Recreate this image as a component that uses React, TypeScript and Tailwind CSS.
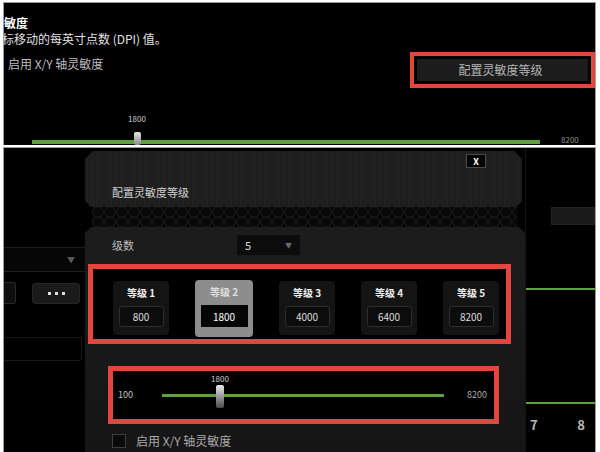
import React from "react";

const levels = [
  { name: "等级 1", value: "800" },
  { name: "等级 2", value: "1800", active: true },
  { name: "等级 3", value: "4000" },
  { name: "等级 4", value: "6400" },
  { name: "等级 5", value: "8200" },
];

function Honeycomb() {
  return (
    <svg className="block h-full w-full" preserveAspectRatio="none">
      <defs>
        <pattern id="hex" width="12" height="10" patternUnits="userSpaceOnUse">
          <path
            d="M3 0 L9 0 L12 5 L9 10 L3 10 L0 5 Z"
            fill="#080808"
            stroke="#1c1c1c"
            strokeWidth="1"
          />
        </pattern>
      </defs>
      <rect width="100%" height="100%" fill="#040404" />
      <rect width="100%" height="100%" fill="url(#hex)" />
    </svg>
  );
}

function LevelCard({ name, value, active }: { name: string; value: string; active?: boolean }) {
  return (
    <div
      className={
        active
          ? "flex h-[57px] w-[58px] flex-col items-center rounded-[4px] bg-[#8d8d8d] pt-[5px] -mt-[1px]"
          : "flex h-[54px] w-[56px] flex-col items-center rounded-[4px] bg-[#141414] pt-[5px]"
      }
    >
      <div className={active ? "text-[10px] font-bold leading-[14px] text-[#dedede]" : "text-[10px] font-bold leading-[14px] text-[#ececec]"}>
        {name}
      </div>
      <div
        className={
          active
            ? "mt-[6px] flex h-[22px] w-[47px] items-center justify-center bg-[#050505] text-[10px] text-white"
            : "mt-[6px] flex h-[21px] w-[45px] items-center justify-center rounded-[3px] border border-[#2e2e2e] bg-[#0c0c0c] text-[10px] text-[#dcdcdc]"
        }
      >
        {value}
      </div>
    </div>
  );
}

export default function App() {
  return (
    <div className="h-[452px] w-[600px] overflow-hidden bg-white font-['Noto_Sans_CJK_SC','Noto_Sans',sans-serif]">
      {/* top screenshot */}
      <div className="ml-[3px] mt-[2px] flex h-[143px] w-[593px] flex-col overflow-hidden border-l border-r border-t border-[#9c9c9c] bg-black">
        <div className="mt-[12px] text-[12px] font-bold leading-[16px] text-white">敏度</div>
        <div className="-ml-[2px] text-[12px] leading-[16px] text-[#e2e2e2]">标移动的每英寸点数 (DPI) 值。</div>
        <div className="mt-[5px] flex items-start justify-between">
          <div className="ml-[4px] mt-[4px] text-[12px] leading-[16px] text-[#bdbdbd]">启用 X/Y 轴灵敏度</div>
          <div className="w-[185px] border-[4px] border-[#e2463c] p-[3px]">
            <div className="flex h-[22px] items-center justify-center bg-[#1c1c1c] pr-[4px] text-[12px] text-[#b4b4b4]">
              配置灵敏度等级
            </div>
          </div>
        </div>
        <div className="mt-auto flex items-end">
          <div className="relative ml-[28px] mb-[1px] h-[4px] w-[508px] bg-[#5f9f3f]">
            <div className="absolute -top-[8px] left-[102px] h-[13px] w-[7px] rounded-[2px] bg-gradient-to-b from-[#e6e6e6] to-[#8a8a8a]" />
            <div className="absolute -top-[26px] left-[105px] -translate-x-1/2 text-[8px] leading-[10px] text-[#cfcfcf]">1800</div>
          </div>
          <div className="ml-[21px] text-[8px] leading-[10px] text-[#8f8f8f]">8200</div>
        </div>
      </div>

      {/* bottom screenshot */}
      <div className="ml-[3px] mt-[2px] flex h-[305px] w-[593px] overflow-hidden border-l border-r border-t border-[#9c9c9c] bg-black">
        {/* left background column */}
        <div className="flex w-[81px] flex-col">
          <div className="mt-[99px] flex h-[25px] items-center justify-end border-b border-t border-[#1e1e1e] bg-[#060606] pr-[10px]">
            <span className="text-[8px] text-[#5a5a5a]">▼</span>
          </div>
          <div className="mt-[10px] flex h-[22px] items-center">
            <div className="h-[22px] w-[12px] rounded-r-[3px] border border-l-0 border-[#2a2a2a] bg-[#0e0e0e]" />
            <div className="ml-[16px] flex h-[21px] w-[48px] items-center justify-center gap-[4px] rounded-[3px] border border-[#262626] bg-[#1a1a1a]">
              <span className="h-[3px] w-[3px] bg-[#e0e0e0]" />
              <span className="h-[3px] w-[3px] bg-[#e0e0e0]" />
              <span className="h-[3px] w-[3px] bg-[#e0e0e0]" />
            </div>
          </div>
          <div className="mt-[33px] h-[24px] w-[78px] rounded-br-[4px] border-b border-r border-t border-[#181818]" />
        </div>

        {/* modal */}
        <div className="mt-[3px] flex w-[440px] flex-col">
          <div className="flex h-[56px] w-[437px] flex-col bg-[repeating-linear-gradient(90deg,#1d1d1d_0px,#1d1d1d_2px,#222222_2px,#222222_3px)] [clip-path:polygon(8px_0,calc(100%_-_8px)_0,100%_8px,100%_calc(100%_-_6px),calc(100%_-_6px)_100%,6px_100%,0_calc(100%_-_6px),0_8px)]">
            <div className="mr-[36px] mt-[3px] flex justify-end">
              <div className="flex h-[14px] w-[20px] items-center justify-center border border-[#4a4a4a] bg-[#050505] text-[9px] font-bold leading-none text-white">
                X
              </div>
            </div>
            <div className="ml-[27px] mt-[16px] text-[11px] leading-[16px] text-[#d0d0d0]">配置灵敏度等级</div>
          </div>
          <div className="ml-[7px] h-[20px] w-[426px]">
            <Honeycomb />
          </div>
          <div className="flex flex-1 flex-col bg-gradient-to-b from-[#1c1c1c] to-[#151515] [clip-path:polygon(6px_0,calc(100%_-_6px)_0,100%_6px,100%_100%,0_100%,0_6px)]">
            <div className="mt-[8px] flex items-center">
              <div className="ml-[27px] w-[125px] text-[11px] leading-[16px] text-[#bdbdbd]">级数</div>
              <div className="flex h-[20px] w-[63px] items-center justify-between bg-[#0c0c0c] pl-[8px] pr-[8px]">
                <span className="text-[11px] text-[#d8d8d8]">5</span>
                <span className="text-[7px] text-[#6a6a6a]">▼</span>
              </div>
            </div>

            <div className="ml-[3px] mt-[9px] flex h-[80px] w-[423px] items-start gap-[26px] border-[5px] border-[#e2463c] bg-black pl-[20px] pt-[12px]">
              {levels.map((l) => (
                <LevelCard key={l.name} name={l.name} value={l.value} active={l.active} />
              ))}
            </div>

            <div className="ml-[23px] mt-[22px] flex h-[58px] w-[391px] items-center border-[5px] border-[#e2463c] bg-black">
              <div className="w-[49px] pl-[5px] text-[9px] text-[#c4c4c4]">100</div>
              <div className="relative h-[3px] w-[282px] bg-[#5f9f3f]">
                <div className="absolute -top-[9px] left-[54px] h-[23px] w-[8px] rounded-[2px] bg-gradient-to-b from-[#eaeaea] via-[#9a9a9a] to-[#4a4a4a]" />
                <div className="absolute -top-[20px] left-[58px] -translate-x-1/2 text-[8px] leading-[10px] text-[#cfcfcf]">1800</div>
              </div>
              <div className="ml-[23px] text-[9px] text-[#a8a8a8]">8200</div>
            </div>

            <div className="ml-[27px] mt-[9px] flex items-center">
              <div className="h-[14px] w-[14px] border border-[#3e3e3e] bg-[#0a0a0a]" />
              <div className="ml-[10px] text-[12px] leading-[16px] text-[#a9a9a9]">启用 X/Y 轴灵敏度</div>
            </div>
          </div>
        </div>

        {/* right background column */}
        <div className="flex w-[70px] flex-col border-l border-[#141414]">
          <div className="ml-[25px] mt-[59px] h-[18px] w-[44px] border border-[#232323] bg-[#1a1a1a]" />
          <div className="mt-[63px] h-[2px] w-full bg-[#5f9f3f]" />
          <div className="mt-[112px] h-[2px] w-full bg-[#5f9f3f]" />
          <div className="mt-[13px] flex justify-between pl-[4px] pr-[10px] text-[13px] font-bold leading-[16px] text-[#b8b8b8]">
            <span>7</span>
            <span>8</span>
          </div>
        </div>
      </div>
    </div>
  );
}
